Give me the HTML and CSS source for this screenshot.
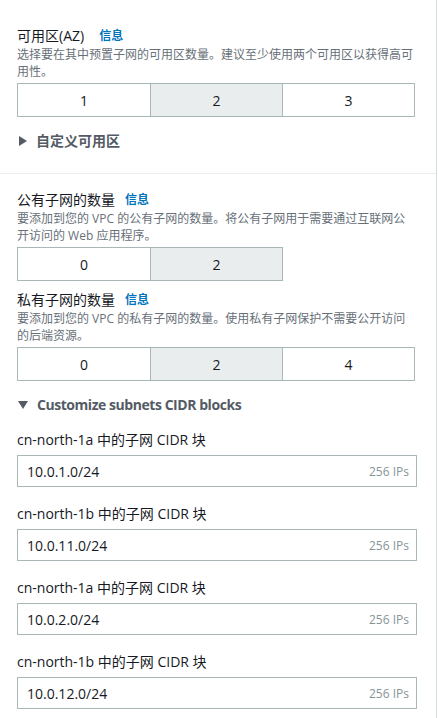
FILE: index.html
```html
<!DOCTYPE html>
<html lang="zh-CN">
<head>
<meta charset="utf-8">
<link rel="stylesheet" href="styles.css">
</head>
<body>
<div class="panel">
  <div class="section section-az">
    <div class="field">
      <div class="label"><span>可用区(AZ)</span><a class="info info-wide">信息</a></div>
      <div class="desc">选择要在其中预置子网的可用区数量。建议至少使用两个可用区以获得高可用性。</div>
      <div class="seg seg-3">
        <div class="opt">1</div>
        <div class="opt sel">2</div>
        <div class="opt">3</div>
      </div>
    </div>
    <div class="expander"><span class="caret-right"></span><span>自定义可用区</span></div>
  </div>
  <div class="section section-subnets">
    <div class="field">
      <div class="label"><span>公有子网的数量</span><a class="info">信息</a></div>
      <div class="desc">要添加到您的 VPC 的公有子网的数量。将公有子网用于需要通过互联网公开访问的 Web 应用程序。</div>
      <div class="seg seg-2">
        <div class="opt">0</div>
        <div class="opt sel">2</div>
      </div>
    </div>
    <div class="field field-next">
      <div class="label"><span>私有子网的数量</span><a class="info">信息</a></div>
      <div class="desc">要添加到您的 VPC 的私有子网的数量。使用私有子网保护不需要公开访问的后端资源。</div>
      <div class="seg seg-3">
        <div class="opt">0</div>
        <div class="opt sel">2</div>
        <div class="opt">4</div>
      </div>
    </div>
    <div class="expander"><span class="caret-down"></span><span class="latin-bold">Customize subnets CIDR blocks</span></div>
    <div class="cidr-list">
      <div class="cidr">
        <div class="cidr-label">cn-north-1a 中的子网 CIDR 块</div>
        <div class="input"><span class="val">10.0.1.0/24</span><span class="ips">256 IPs</span></div>
      </div>
      <div class="cidr">
        <div class="cidr-label">cn-north-1b 中的子网 CIDR 块</div>
        <div class="input"><span class="val">10.0.11.0/24</span><span class="ips">256 IPs</span></div>
      </div>
      <div class="cidr">
        <div class="cidr-label">cn-north-1a 中的子网 CIDR 块</div>
        <div class="input"><span class="val">10.0.2.0/24</span><span class="ips">256 IPs</span></div>
      </div>
      <div class="cidr">
        <div class="cidr-label">cn-north-1b 中的子网 CIDR 块</div>
        <div class="input"><span class="val">10.0.12.0/24</span><span class="ips">256 IPs</span></div>
      </div>
    </div>
  </div>
</div>
</body>
</html>
```
FILE: styles.css
```css
* { box-sizing: border-box; }
html, body { margin: 0; padding: 0; background: #fff; }
body {
  font-family: "Open Sans", "Noto Sans CJK SC", sans-serif;
  color: #16191f;
  font-size: 14px;
}
.panel {
  width: 437px;
  min-height: 718px;
  border-right: 1px solid #d5dbdb;
}
.section { padding: 0 0 0 17px; }
.section-az {
  padding-top: 26px;
  padding-bottom: 22px;
  border-bottom: 1px solid #eaeded;
}
.section-subnets { padding-top: 16px; }
.field { display: flex; flex-direction: column; }
.field-next { margin-top: 9px; }
.label {
  display: flex;
  align-items: center;
  height: 20px;
  font-size: 14px;
  line-height: 20px;
  color: #16191f;
}
.info {
  color: #0073bb;
  font-weight: 700;
  font-size: 12px;
  line-height: 20px;
  margin-left: 10px;
}
.info-wide { margin-left: 15px; }
.desc {
  font-size: 12px;
  line-height: 17px;
  height: 34px;
  overflow: hidden;
  color: #687078;
  width: 400px;
  margin-bottom: 3px;
}
.seg {
  display: grid;
  height: 34px;
  border: 1px solid #aab7b8;
}
.seg-3 { width: 398px; grid-template-columns: 1fr 1fr 1fr; }
.seg-2 { width: 266px; grid-template-columns: 1fr 1fr; }
.opt {
  display: flex;
  align-items: center;
  justify-content: center;
  font-size: 14px;
  color: #16191f;
  border-left: 1px solid #aab7b8;
}
.opt:first-child { border-left: none; }
.opt.sel { background: #eaeded; }
.expander {
  margin-top: 14px;
  height: 20px;
  display: flex;
  align-items: center;
  font-size: 14px;
  line-height: 20px;
  font-weight: 700;
  color: #545b64;
}
.latin-bold { letter-spacing: -0.45px; }
.caret-right {
  width: 0; height: 0;
  border-top: 5px solid transparent;
  border-bottom: 5px solid transparent;
  border-left: 8px solid #545b64;
  margin: 0 9px 0 2px;
}
.caret-down {
  width: 0; height: 0;
  border-left: 5px solid transparent;
  border-right: 5px solid transparent;
  border-top: 8px solid #545b64;
  margin: 0 9px 0 1px;
}
.cidr-list {
  margin-top: 14px;
  display: flex;
  flex-direction: column;
  gap: 16px;
}
.cidr-label {
  font-size: 14px;
  line-height: 22px;
  height: 22px;
  margin-bottom: 4px;
}
.input {
  width: 400px;
  height: 32px;
  border: 1px solid #aab7b8;
  display: flex;
  align-items: center;
  justify-content: space-between;
  padding: 0 7px 0 9px;
}
.val { font-size: 14px; color: #16191f; }
.ips { font-size: 12px; color: #879596; }
```
